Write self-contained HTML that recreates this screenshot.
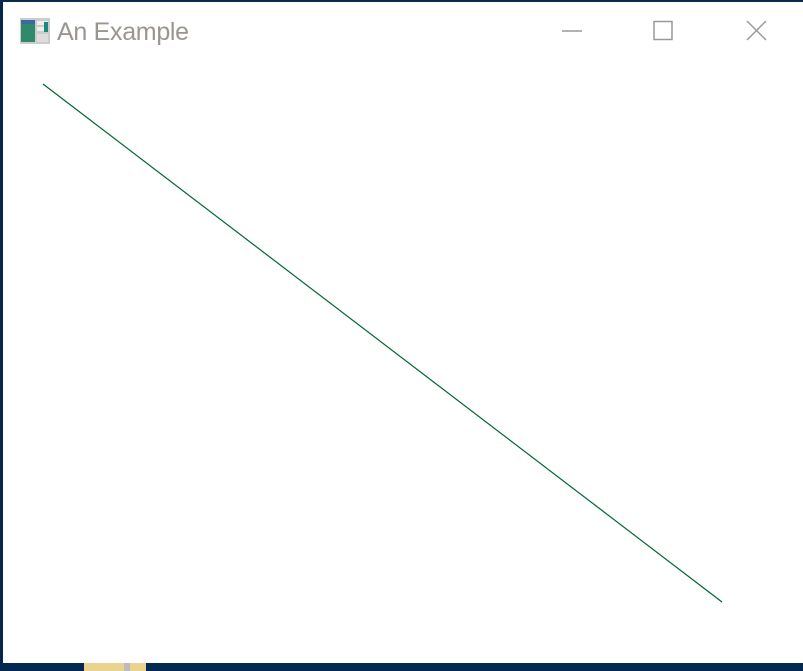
<!DOCTYPE html>
<html><head><meta charset="utf-8"><style>
html,body{margin:0;padding:0;width:803px;height:671px;overflow:hidden;background:#06264a}
.win{position:absolute;left:3px;top:2px;width:800px;height:661px;background:#fff}
.title{position:absolute;left:57px;top:18px;font:25px "Liberation Sans",sans-serif;color:#9a968f;letter-spacing:-0.3px}
</style></head><body>
<div style="position:absolute;left:0;top:0;width:803px;height:2px;background:#0b2a4c"></div>
<div class="win"></div>
<div style="position:absolute;left:0;top:663px;width:803px;height:8px;background:#042852"></div>
<div style="position:absolute;left:84px;top:663px;width:62px;height:8px;background:#e9d38e"></div>
<div style="position:absolute;left:124px;top:663px;width:6px;height:8px;background:#bbb"></div>
<svg style="position:absolute;left:0;top:0" width="803" height="671">
<rect x="20" y="18" width="30" height="26" fill="#ccc"/>
<rect x="21" y="20" width="14" height="22" fill="#2e8a6a"/>
<rect x="21" y="20" width="14" height="4" fill="#3a6aa0"/>
<rect x="37" y="21" width="11" height="4" fill="#eee"/>
<rect x="37" y="27" width="11" height="4" fill="#eee"/>
<rect x="44" y="22" width="4" height="10" fill="#1a8a7a"/>
<rect x="37" y="34" width="11" height="8" fill="#ddd"/>
<line x1="562" y1="31" x2="582" y2="31" stroke="#999" stroke-width="1.5"/>
<rect x="654" y="21.5" width="18" height="18" fill="none" stroke="#999" stroke-width="1.5"/>
<path d="M747 21 L766 40 M766 21 L747 40" stroke="#999" stroke-width="1.5"/>
<line x1="43" y1="84" x2="722" y2="602" stroke="#006633" stroke-width="1.2"/>
</svg>
<div class="title">An Example</div>
</body></html>
